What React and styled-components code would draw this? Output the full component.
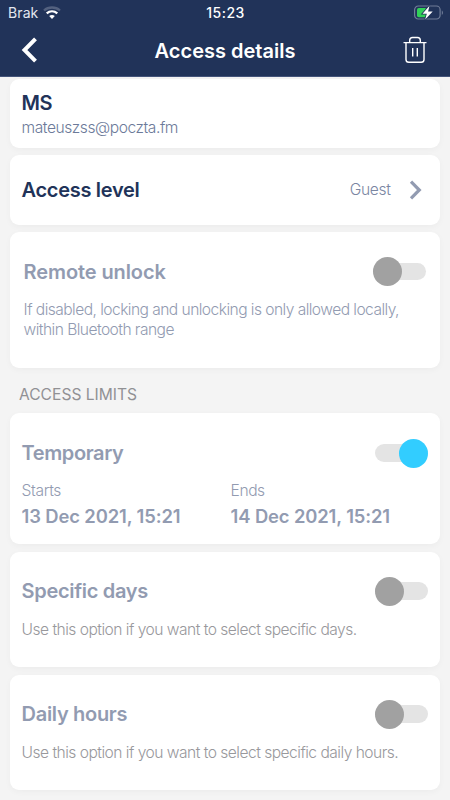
import React from "react";
import styled, { createGlobalStyle } from "styled-components";

const Global = createGlobalStyle`
  * { box-sizing: border-box; }
  html, body { margin: 0; padding: 0; }
  body { background: #f4f4f4; font-family: Inter, "Liberation Sans", sans-serif; }
`;

const Screen = styled.div`
  width: 450px;
  height: 800px;
  overflow: hidden;
  background: #f4f4f4;
`;

const Header = styled.header`
  height: 77px;
  background: #213359;
  border-bottom: 1px solid #44547a;
  color: #fff;
`;

const StatusBar = styled.div`
  height: 25px;
  display: grid;
  grid-template-columns: 1fr auto 1fr;
  align-items: center;
  padding: 0 7px 0 8px;
`;

const Carrier = styled.div`
  display: flex;
  align-items: center;
  gap: 5px;
  font-size: 14px;
  line-height: 24px;
  letter-spacing: 0.1px;
  color: #e3e7ef;
`;

const Clock = styled.div`
  font-size: 14px;
  font-weight: 500;
  line-height: 24px;
  letter-spacing: 0.5px;
`;

const Battery = styled.svg`
  justify-self: end;
  display: block;
`;

const NavBar = styled.div`
  height: 51px;
  display: grid;
  grid-template-columns: 60px 1fr 60px;
  align-items: center;
`;

const NavButton = styled.button`
  display: flex;
  align-items: center;
  height: 50px;
  padding: 0 0 1px ${(p) => p.$inset}px;
  border: 0;
  background: none;
  color: #fff;
`;

const NavTitle = styled.h1`
  margin: 0;
  text-align: center;
  font-size: 20px;
  line-height: 26px;
  font-weight: 600;
  white-space: nowrap;
`;

const Content = styled.main`
  display: flex;
  flex-direction: column;
  gap: 7.4px;
  padding: 2px 10px 0;
`;

const Card = styled.section`
  flex: none;
  height: ${(p) => p.$height}px;
  padding: ${(p) => p.$pad};
  border-radius: 9px;
  background: #fff;
  box-shadow: 0 2px 6px rgba(0, 0, 0, 0.035);
`;

const Row = styled.div`
  display: flex;
  align-items: center;
  justify-content: space-between;
  height: ${(p) => p.$height}px;
`;

const Heading = styled.h2`
  margin: 0;
  font-size: 20px;
  line-height: 26px;
  font-weight: 600;
  letter-spacing: ${(p) => p.$track ?? -0.31}px;
  color: ${(p) => (p.$muted ? "#929bb1" : "#213359")};
  white-space: nowrap;
`;

const Note = styled.p`
  margin: ${(p) => p.$top || 0}px 0 0;
  font-size: 15.6px;
  line-height: 20px;
  font-weight: 300;
  letter-spacing: ${(p) => p.$track ?? -0.52}px;
  color: ${(p) => p.$color || "#929bb1"};
  white-space: nowrap;
`;

const LevelValue = styled.div`
  display: flex;
  align-items: center;
  gap: 18.5px;
`;

const SectionLabel = styled.h3`
  margin: 0;
  height: 30.6px;
  padding-left: 9px;
  font-size: 15.6px;
  line-height: 39px;
  font-weight: 400;
  color: #919194;
`;

const Dates = styled.div`
  display: grid;
  grid-template-columns: 209px 1fr;
  margin-top: 13px;
`;

const DateValue = styled.div`
  margin-top: 4.4px;
  font-size: 18.4px;
  line-height: 23px;
  font-weight: 600;
  letter-spacing: -0.12px;
  color: #929bb1;
  white-space: nowrap;
`;

const Track = styled.button`
  display: flex;
  align-items: center;
  justify-content: ${(p) => (p.$on ? "flex-end" : "flex-start")};
  width: 53px;
  height: 17.4px;
  padding: 0;
  border: 0;
  border-radius: 9px;
  background: #e4e4e4;
`;

const Thumb = styled.span`
  flex: none;
  width: 29px;
  height: 29px;
  border-radius: 50%;
  background: ${(p) => (p.$on ? "#32cdff" : "#a1a1a1")};
`;

const Toggle = ({ on = false, label }) => (
  <Track $on={on} role="switch" aria-checked={on} aria-label={label}>
    <Thumb $on={on} />
  </Track>
);

const WifiIcon = () => (
  <svg width="18" height="14" viewBox="0 0 18 14" fill="none">
    <path d="M1 4.500C5.400.5 12.600.5 17 4.500" stroke="#53617f" strokeWidth="2.300" />
    <path d="M3.700 7.400C6.800 4.800 11.200 4.800 14.300 7.400" stroke="#fff" strokeWidth="2.300" />
    <path d="M6.200 10C7.800 8.500 10.200 8.500 11.800 10L9 13Z" fill="#fff" />
  </svg>
);

const BatteryIcon = () => (
  <Battery width="30" height="16" viewBox="0 0 30 16">
    <rect x="1.600" y="1" width="25.500" height="13" rx="3.700" fill="none" stroke="#707d98" strokeWidth="1.200" />
    <path d="M28.800 5.500c1.500.7 1.500 3.700 0 4.400z" fill="#707d98" />
    <rect x="4" y="3" width="9.500" height="9.200" rx="1.700" fill="#31d158" />
    <path d="M16.500 0.700L9.500 8.700h4.300L12.200 14.500L19.700 6.500h-4.600z" fill="#fff" stroke="#213359" strokeWidth="1.600" paintOrder="stroke" />
  </Battery>
);

const BackIcon = () => (
  <svg width="18" height="28" viewBox="0 0 18 28" fill="none">
    <path d="M14.500 2.800L3.500 14L14.500 25.200" stroke="#fff" strokeWidth="4" />
  </svg>
);

const TrashIcon = () => (
  <svg width="24" height="28" viewBox="0 0 24 28" fill="none" stroke="#fff" strokeWidth="1.400">
    <path d="M0.500 6.600H23.500M3 6.600V23.500Q3 26.300 5.800 26.300H18.200Q21 26.300 21 23.500V6.600" />
    <path d="M6.700 6.500V4.300Q6.700 1.500 9.500 1.500H14.500Q17.300 1.500 17.300 4.300V6.500M9.700 12V20.500M14.300 12V20.500" />
  </svg>
);

const ChevronIcon = () => (
  <svg width="14" height="20" viewBox="0 0 14 20" fill="none">
    <path d="M2 1.700L10.300 10L2 18.300" stroke="#929bb1" strokeWidth="3.200" />
  </svg>
);

export default function App() {
  return (
    <Screen>
      <Global />
      <Header>
        <StatusBar>
          <Carrier>
            Brak
            <WifiIcon />
          </Carrier>
          <Clock>15:23</Clock>
          <BatteryIcon />
        </StatusBar>
        <NavBar>
          <NavButton $inset={21} aria-label="Back">
            <BackIcon />
          </NavButton>
          <NavTitle>Access details</NavTitle>
          <NavButton $inset={13} aria-label="Delete">
            <TrashIcon />
          </NavButton>
        </NavBar>
      </Header>
      <Content>
        <Card $height={69} $pad="11px 11.6px 0">
          <Heading $track={-0.6}>MS</Heading>
          <Note $top={2} $track={-0.45} $color="#6c7a99">mateuszss@poczta.fm</Note>
        </Card>
        <Card $height={69.4} $pad="0 17px 0 11.6px">
          <Row $height={69.4}>
            <Heading>Access level</Heading>
            <LevelValue>
              <Note $track={-0.35} $color="#7a86a2">Guest</Note>
              <ChevronIcon />
            </LevelValue>
          </Row>
        </Card>
        <Card $height={135.4} $pad="25px 14px 0 13.6px">
          <Row $height={29}>
            <Heading $muted $track={-0.1}>Remote unlock</Heading>
            <Toggle label="Remote unlock" />
          </Row>
          <Note $top={14} $track={-0.55}>
            If disabled, locking and unlocking is only allowed locally,
            <br />
            within Bluetooth range
          </Note>
        </Card>
        <SectionLabel>ACCESS LIMITS</SectionLabel>
        <Card $height={131.3} $pad="25.600px 11.6px 0">
          <Row $height={29}>
            <Heading $muted $track={-0.4}>Temporary</Heading>
            <Toggle on label="Temporary" />
          </Row>
          <Dates>
            <div>
              <Note $track={-0.35}>Starts</Note>
              <DateValue>13 Dec 2021, 15:21</DateValue>
            </div>
            <div>
              <Note $track={-0.45}>Ends</Note>
              <DateValue>14 Dec 2021, 15:21</DateValue>
            </div>
          </Dates>
        </Card>
        <Card $height={115.6} $pad="25px 11.6px 0">
          <Row $height={29}>
            <Heading $muted>Specific days</Heading>
            <Toggle label="Specific days" />
          </Row>
          <Note $top={14} $color="#98989c">Use this option if you want to select specific days.</Note>
        </Card>
        <Card $height={115.6} $pad="25px 11.6px 0">
          <Row $height={29}>
            <Heading $muted>Daily hours</Heading>
            <Toggle label="Daily hours" />
          </Row>
          <Note $top={14} $color="#98989c">Use this option if you want to select specific daily hours.</Note>
        </Card>
      </Content>
    </Screen>
  );
}
